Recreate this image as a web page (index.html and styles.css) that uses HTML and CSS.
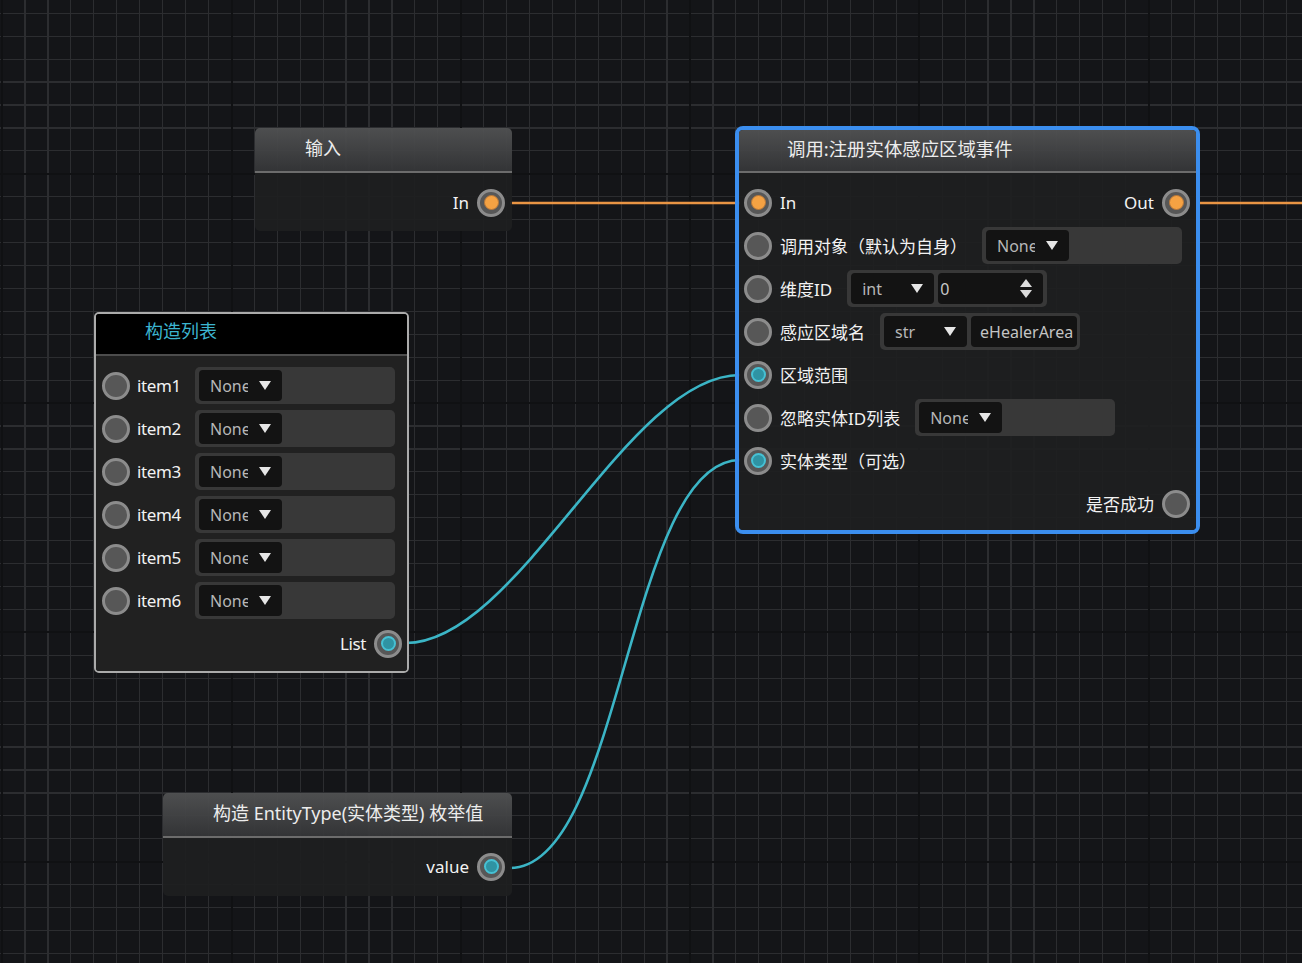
FILE: index.html
```html
<!DOCTYPE html>
<html lang="zh">
<head>
<meta charset="utf-8">
<title>Node Graph</title>
<link rel="stylesheet" href="styles.css">
</head>
<body>
<div class="canvas">
  <svg class="wires" width="1302" height="963" viewBox="0 0 1302 963">
    <path class="w-exec" d="M510 203 H740"/>
    <path class="w-exec" d="M1196 203 H1302"/>
    <path class="w-data" d="M406 643 C518 643 627 375 740 375"/>
    <path class="w-data" d="M510 868 C622 868 628 460 740 460"/>
  </svg>

  <div class="node node-input">
    <div class="head">输入</div>
    <div class="body">
      <div class="row right">
        <span class="label">In</span>
        <span class="port exec"></span>
      </div>
    </div>
  </div>

  <div class="node node-list">
    <div class="head">构造列表</div>
    <div class="body">
      <div class="row"><span class="port"></span><span class="label">item1</span><div class="field"><div class="dd"><span class="t">None</span><span class="tri"></span></div></div></div>
      <div class="row"><span class="port"></span><span class="label">item2</span><div class="field"><div class="dd"><span class="t">None</span><span class="tri"></span></div></div></div>
      <div class="row"><span class="port"></span><span class="label">item3</span><div class="field"><div class="dd"><span class="t">None</span><span class="tri"></span></div></div></div>
      <div class="row"><span class="port"></span><span class="label">item4</span><div class="field"><div class="dd"><span class="t">None</span><span class="tri"></span></div></div></div>
      <div class="row"><span class="port"></span><span class="label">item5</span><div class="field"><div class="dd"><span class="t">None</span><span class="tri"></span></div></div></div>
      <div class="row"><span class="port"></span><span class="label">item6</span><div class="field"><div class="dd"><span class="t">None</span><span class="tri"></span></div></div></div>
      <div class="row right"><span class="label">List</span><span class="port data"></span></div>
    </div>
  </div>

  <div class="node node-call">
    <div class="head">调用:注册实体感应区域事件</div>
    <div class="body">
      <div class="row">
        <span class="port exec"></span><span class="label">In</span>
        <span class="spacer"></span>
        <span class="label label-r">Out</span><span class="port exec"></span>
      </div>
      <div class="row">
        <span class="port"></span><span class="label">调用对象（默认为自身）</span>
        <div class="field"><div class="dd"><span class="t">None</span><span class="tri"></span></div></div>
      </div>
      <div class="row">
        <span class="port"></span><span class="label">维度ID</span>
        <div class="field">
          <div class="dd"><span class="t">int</span><span class="tri"></span></div>
          <div class="spin"><span class="num">0</span><span class="arrows"><span class="up"></span><span class="down"></span></span></div>
        </div>
      </div>
      <div class="row">
        <span class="port"></span><span class="label">感应区域名</span>
        <div class="field">
          <div class="dd"><span class="t">str</span><span class="tri"></span></div>
          <div class="tbox">eHealerArea</div>
        </div>
      </div>
      <div class="row">
        <span class="port data"></span><span class="label">区域范围</span>
      </div>
      <div class="row">
        <span class="port"></span><span class="label">忽略实体ID列表</span>
        <div class="field"><div class="dd"><span class="t">None</span><span class="tri"></span></div></div>
      </div>
      <div class="row">
        <span class="port data"></span><span class="label">实体类型（可选）</span>
      </div>
      <div class="row right">
        <span class="label">是否成功</span><span class="port"></span>
      </div>
    </div>
  </div>

  <div class="node node-enum">
    <div class="head">构造 EntityType(实体类型) 枚举值</div>
    <div class="body">
      <div class="row right">
        <span class="label">value</span>
        <span class="port data"></span>
      </div>
    </div>
  </div>
</div>
</body>
</html>
```

FILE: styles.css
```css
html, body {
  margin: 0;
  padding: 0;
  background: #141518;
}

body {
  font-family: "Noto Sans", "Noto Sans CJK SC", sans-serif;
}

.canvas {
  position: relative;
  width: 1302px;
  height: 963px;
  overflow: hidden;
  background-color: #141518;
  background-image:
    repeating-linear-gradient(90deg, transparent 0 1.2px, #101113 1.2px 3.2px, transparent 3.2px 229.3px),
    repeating-linear-gradient(180deg, transparent 0 172.9px, #101113 172.9px 174.9px, transparent 174.9px 229.3px),
    repeating-linear-gradient(90deg, transparent 0 1.5px, #2c2d30 1.5px 2.7px, transparent 2.7px 22.93px),
    repeating-linear-gradient(180deg, transparent 0 12.7px, #2c2d30 12.7px 13.9px, transparent 13.9px 22.93px);
}

.wires {
  position: absolute;
  left: 0;
  top: 0;
}

.wires path {
  fill: none;
  stroke-width: 2.6;
}

.w-exec {
  stroke: #e99544;
}

.w-data {
  stroke: #3bb5c6;
}

/* nodes */
.node {
  position: absolute;
  box-sizing: border-box;
  border-radius: 5px;
  overflow: hidden;
  color: #f2f2f2;
}

.node-input {
  left: 255px;
  top: 128px;
  width: 257px;
  height: 103px;
}

.node-enum {
  left: 163px;
  top: 793px;
  width: 349px;
  height: 103px;
}

.node-call {
  left: 735px;
  top: 126px;
  width: 465px;
  height: 408px;
  border: 4px solid #3b8eef;
  border-radius: 8px;
}

.node-list {
  left: 94px;
  top: 312px;
  width: 315px;
  height: 361px;
  border: 2px solid #ababab;
}

.head {
  box-sizing: border-box;
  height: 45px;
  padding: 0 0 5px 50px;
  display: flex;
  align-items: center;
  font-size: 18px;
  color: #ececec;
  white-space: nowrap;
  background: linear-gradient(rgba(81, 82, 83, 0.94), rgba(53, 54, 56, 0.94));
  border-bottom: 2px solid #6c6c6c;
}

.node-call .head {
  height: 43px;
  padding: 0 0 6px 48px;
  font-size: 18.4px;
}

.node-list .head {
  height: 42px;
  padding: 0 0 8px 49px;
  background: #000;
  border-bottom: 2px solid #4c4c4c;
  color: #3cb4cf;
}

.body {
  box-sizing: border-box;
  background: rgba(30, 31, 33, 0.92);
}

.node-input .body,
.node-enum .body {
  height: 58px;
  padding: 8px 7px 0 0;
}

.node-enum .body {
  padding-top: 7px;
}

.node-call .body {
  height: 357px;
  padding: 8px 6px 0 5px;
}

.node-list .body {
  height: 315px;
  padding: 8px 5px 0 6px;
  background: #212121;
}

.row {
  height: 43px;
  display: flex;
  align-items: center;
  font-size: 17px;
  white-space: nowrap;
}

.row.right {
  justify-content: flex-end;
}

.spacer {
  flex: 1;
}

.label {
  margin-left: 8px;
}

.right .label,
.label-r {
  margin-left: 0;
  margin-right: 8px;
}

.node-list .row .label {
  margin-left: 7px;
  width: 58px;
  letter-spacing: -0.4px;
}

.node-list .row.right .label {
  width: auto;
  margin-left: 0;
  margin-right: 8px;
}

/* ports */
.port {
  box-sizing: border-box;
  flex: none;
  width: 28px;
  height: 28px;
  border-radius: 50%;
  border: 3px solid #8c8c8c;
  background: #575757;
  display: flex;
  align-items: center;
  justify-content: center;
}

.port.exec::after,
.port.data::after {
  content: "";
  box-sizing: border-box;
  width: 15px;
  height: 15px;
  border-radius: 50%;
}

.port.exec::after {
  background: #f5a243;
  border: 1.5px solid #b8783a;
}

.port.data::after {
  background: #2f93a3;
  border: 2px solid #46c1d4;
}

/* widgets */
.field {
  box-sizing: border-box;
  flex: none;
  width: 200px;
  height: 37px;
  padding: 3px 4px;
  margin-left: 15px;
  display: flex;
  gap: 4px;
  background: #383838;
  border-radius: 5px;
  font-size: 16px;
}

.node-list .field {
  margin-left: 0;
}

.dd {
  box-sizing: border-box;
  flex: none;
  width: 83px;
  height: 31px;
  padding: 0 11px;
  display: flex;
  align-items: center;
  justify-content: space-between;
  background: #131313;
  border-radius: 4px;
}

.dd .t {
  width: 38px;
  overflow: hidden;
  color: #b7b7b7;
}

.tri {
  width: 0;
  height: 0;
  border-left: 6px solid transparent;
  border-right: 6px solid transparent;
  border-top: 9px solid #e6e6e6;
}

.spin {
  box-sizing: border-box;
  flex: none;
  width: 105px;
  height: 31px;
  padding: 0 11px 0 2px;
  display: flex;
  align-items: center;
  justify-content: space-between;
  background: #131313;
  border-radius: 4px;
}

.num {
  color: #c8c8c8;
}

.arrows {
  display: flex;
  flex-direction: column;
  gap: 3px;
}

.up,
.down {
  width: 0;
  height: 0;
  border-left: 6px solid transparent;
  border-right: 6px solid transparent;
}

.up {
  border-bottom: 8px solid #dcdcdc;
}

.down {
  border-top: 8px solid #dcdcdc;
}

.tbox {
  box-sizing: border-box;
  flex: none;
  width: 106px;
  height: 31px;
  padding-left: 9px;
  display: flex;
  align-items: center;
  color: #c4c4c4;
  background: #131313;
  border-radius: 4px;
  overflow: hidden;
}
```
